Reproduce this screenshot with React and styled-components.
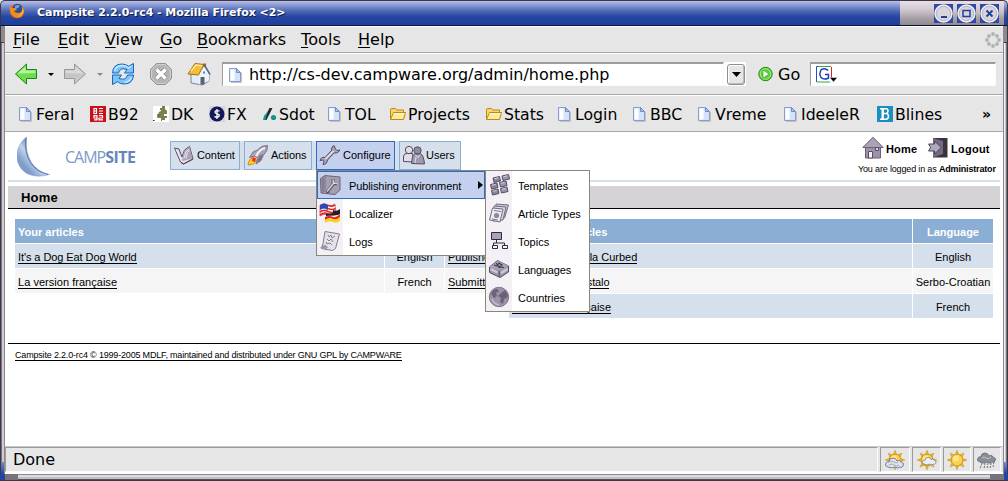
import React from "react";
import styled, { createGlobalStyle } from "styled-components";

const Global = createGlobalStyle`
  * { box-sizing: border-box; }
  body { margin: 0; background: #fff; overflow: hidden; }
`;

/* ---------- window chrome ---------- */

const Window = styled.div`
  width: 1008px;
  height: 481px;
  display: flex;
  flex-direction: column;
  background: #e6e6e6;
  color: #000;
  font-family: "DejaVu Sans", sans-serif;
  font-size: 16px;
  overflow: hidden;
`;

const TitleBar = styled.header`
  height: 26px;
  flex: none;
  display: flex;
  border: 1px solid #3d3746;
  border-top-left-radius: 5px;
  border-top-right-radius: 5px;
  border-bottom-color: #0e1230;
  background: linear-gradient(#b7c1e8 0, #8c9cd6 4px, #5068b4 10px, #2445a0 16px, #1f3f9c 100%);
  padding-left: 8px;
`;

const TitleText = styled.h1`
  margin: 0 auto 0 12px;
  font-size: 11px;
  line-height: 23px;
  color: #fff;
  white-space: nowrap;
  letter-spacing: ${(p) => p.$ls}px;
  text-shadow: 1px 1px 0 #101c48;
`;

const TitleIcon = styled.div`
  width: 16px;
  padding-top: 2px;
`;

const Caption = styled.div`
  width: 104px;
  margin-right: 3px;
  display: flex;
  align-items: center;
  justify-content: flex-end;
  gap: 4px;
  padding-right: 5px;
  background: linear-gradient(#eadfe8, #cfc7cf 9px, #a39da3 18px, #8f8c91);
`;

const Round = styled.div`
  width: 19px;
  height: 19px;
  background: #2d4aa6;
  svg { display: block; }
`;

const Body = styled.div`
  flex: 1;
  display: flex;
  min-height: 0;
`;

const Edge = styled.div`
  width: 5px;
  flex: none;
  display: flex;
  flex-direction: column;
  background: ${(p) =>
    p.$right
      ? "linear-gradient(90deg,#8d898d 0 1px,#f2eff3 1px 2px,#c9c4cb 2px 3px,#77727c 3px 4px,#3d3746 4px)"
      : "linear-gradient(90deg,#3d3746 0 1px,#77727c 1px 2px,#d0cbd2 2px 4px,#8d898d 4px)"};
`;

const EdgeCap = styled.div`
  height: 17px;
  margin: 0 1px;
  background: #8d898d;
  border-bottom: 1px solid #3d3746;
`;

const EdgeCorner = styled.div`
  height: 12px;
  margin: auto 1px 0;
  background: linear-gradient(#7388cc, #2444a4);
`;

const Main = styled.div`
  flex: 1;
  min-width: 0;
  display: flex;
  flex-direction: column;
`;

const BottomFrame = styled.footer`
  height: 7px;
  flex: none;
  display: flex;
  border-bottom: 1px solid #3d3746;
  background: #cfcad1;
`;

const FrameCorner = styled.div`
  width: ${(p) => p.$w}px;
  background: ${(p) => p.$c};
`;

const FrameBar = styled.div`
  flex: 1;
  background: linear-gradient(#8d8990 0 1px, #dedae2 1px 3px, #c3bfc8 3px 5px, #55505c 5px);
`;

const MenuBar = styled.nav`
  height: 27px;
  flex: none;
  display: flex;
  padding-left: 8px;
  border-bottom: 1px solid #a6a6a6;
  border-top: 1px solid #fff;
`;

const MenuItem = styled.span`
  width: ${(p) => p.$w}px;
  line-height: 26px;
  white-space: nowrap;
  letter-spacing: ${(p) => p.$ls || 0}px;
  u { text-underline-offset: 2px; text-decoration-thickness: 1px; text-decoration-skip-ink: none; }
`;

const Throbber = styled.div`
  margin: 5px 2px 0 auto;
`;

const NavBar = styled.div`
  height: 42px;
  flex: none;
  display: flex;
  align-items: center;
  padding: 0 7px 0 9px;
  border-top: 1px solid #fff;
  border-bottom: 1px solid #a6a6a6;
`;

const Slot = styled.div`
  width: ${(p) => p.$w}px;
  flex: none;
  display: flex;
  align-items: center;
`;

const Field = styled.div`
  width: ${(p) => p.$w}px;
  height: 24px;
  flex: none;
  display: flex;
  align-items: center;
  background: #fff;
  border: 1px solid #fafafa;
  border-top: 2px solid #9c9c9c;
  border-left: 1px solid #9c9c9c;
  padding-left: 5px;
  white-space: nowrap;
  letter-spacing: ${(p) => p.$ls || 0}px;
  svg { margin-right: ${(p) => p.$gap || 0}px; }
`;

const DropButton = styled.div`
  width: 22px;
  height: 24px;
  flex: none;
  display: flex;
  background: #fff;
  padding: 2px 1px 1px 3px;
  margin-right: 12px;
`;

const DropFace = styled.div`
  flex: 1;
  display: flex;
  align-items: center;
  justify-content: center;
  border: 1px solid #8f8f8f;
  border-radius: 3px;
  background: #e6e6e6;
  box-shadow: inset -1px -1px 0 #bcbcbc, inset 1px 1px 0 #fff;
`;

const GoText = styled.span`
  width: 36px;
`;

const Bookmarks = styled.div`
  height: 37px;
  flex: none;
  display: flex;
  align-items: center;
  padding-left: 13px;
  padding-top: 1px;
  border-top: 1px solid #fff;
  border-bottom: 1px solid #a6a6a6;
  font-size: 15.700px;
`;

const Bookmark = styled.div`
  width: ${(p) => p.$w}px;
  flex: none;
  display: flex;
  align-items: center;
  gap: 2px;
  white-space: nowrap;
  svg { flex: none; }
`;

const More = styled.b`
  font-size: 14px;
  line-height: 14px;
`;

const StatusBar = styled.div`
  height: 28px;
  flex: none;
  display: flex;
  gap: 2px;
  padding-right: 2px;
  border-top: 1px solid #c8c8c8;
  border-bottom: 2px solid #fff;
  background: #e6e6e6;
`;

const StatusCell = styled.div`
  width: ${(p) => p.$w}px;
  ${(p) => (p.$grow ? "flex: 1;" : "")}
  display: flex;
  align-items: center;
  justify-content: ${(p) => (p.$grow ? "flex-start" : "center")};
  padding-left: ${(p) => (p.$grow ? 7 : 0)}px;
  border: 1px solid #fafafa;
  border-top-color: #9a9a9a;
  border-left-color: #9a9a9a;
  line-height: 22px;
`;

/* ---------- web page ---------- */

const Page = styled.main`
  flex: 1;
  min-height: 0;
  background: #fff;
  padding: 0 3px;
  position: relative;
  font-family: "Liberation Sans", Arial, sans-serif;
  font-size: 11px;
`;

const Header = styled.div`
  height: 50px;
  display: flex;
  border-bottom: 2px solid #d5e0ec;
`;

const Brand = styled.div`
  width: 162px;
  display: flex;
  padding: 4px 0 0 9px;
`;

const BrandName = styled.div`
  margin: 12px 0 0 14px;
  font-family: "Open Sans", "Noto Sans", sans-serif;
  font-size: 16px;
  line-height: 18px;
  color: #7b9ac8;
  letter-spacing: -1px;
  b { color: #6686ba; font-weight: 700; letter-spacing: -0.5px; }
`;

const Tabs = styled.div`
  height: 29px;
  margin-top: 9px;
  display: flex;
  gap: 4px;
  background: #d5e0ec;
`;

const Tab = styled.div`
  width: ${(p) => p.$w}px;
  display: flex;
  align-items: center;
  gap: ${(p) => p.$gap}px;
  padding: 0 0 1px 2px;
  border: 1px solid ${(p) => (p.$active ? "#316ac5" : "#8baed5")};
  background: ${(p) => (p.$active ? "#c3d1ee" : "#d5e0ec")};
  letter-spacing: ${(p) => p.$ls || 0}px;
  white-space: nowrap;
`;

const User = styled.div`
  margin-left: auto;
  width: 146px;
  padding: 4px 0 0 8px;
  white-space: nowrap;
`;

const UserLinks = styled.div`
  display: flex;
  align-items: center;
  height: 23px;
  font-weight: bold;
`;

const LinkLabel = styled.span`
  width: ${(p) => p.$w}px;
  margin-left: ${(p) => p.$ml}px;
  padding-top: 2px;
  letter-spacing: ${(p) => p.$ls || 0}px;
`;

const LoggedIn = styled.div`
  margin-left: -4px;
  font-size: 9px;
  line-height: 20px;
  letter-spacing: ${(p) => p.$ls}px;
`;

const PageTitle = styled.h2`
  margin: 4px 0 10px;
  height: 23px;
  padding-left: 13px;
  background: #d5d3d5;
  border-bottom: 1px solid #000;
  font-size: 13px;
  line-height: 23px;
  letter-spacing: 0.2px;
`;

const Tables = styled.div`
  display: flex;
  gap: 5px;
  padding: 0 7px;
  align-items: flex-start;
`;

const Grid = styled.div`
  display: grid;
  grid-template-columns: ${(p) => p.$cols};
  grid-auto-rows: 24px;
  gap: 1px;
`;

const Cell = styled.div`
  display: flex;
  align-items: center;
  justify-content: ${(p) => (p.$center ? "center" : "flex-start")};
  padding: 2px ${(p) => (p.$center ? 0 : 3)}px 0;
  background: ${(p) => (p.$head ? "#8baed5" : p.$even ? "#f5f5f5" : "#d5e0ec")};
  color: ${(p) => (p.$head ? "#fff" : "#000")};
  font-weight: ${(p) => (p.$head ? "bold" : "normal")};
  letter-spacing: ${(p) => p.$ls || 0}px;
  white-space: nowrap;
`;

const Underlined = styled.span`
  border-bottom: 1px solid #000;
  line-height: 12px;
`;

const Copyright = styled.div`
  margin-top: 25px;
  border-top: 1px solid #000;
  padding: 5px 0 0 7px;
  font-size: 9px;
  letter-spacing: ${(p) => p.$ls}px;
`;

const Menu = styled.div`
  position: absolute;
  left: ${(p) => p.$x}px;
  top: 38px;
  width: ${(p) => p.$w}px;
  border: 1px solid #8a867a;
  background: linear-gradient(90deg, #f4f0f6 26px, #fff 26px);
`;

const MenuRow = styled.div`
  height: 28px;
  display: flex;
  align-items: center;
  padding-left: ${(p) => (p.$active ? 1 : 2)}px;
  border: ${(p) => (p.$active ? "1px solid #316ac5" : "none")};
  background: ${(p) => (p.$active ? "#c3d1ee" : "transparent")};
  letter-spacing: ${(p) => p.$ls || 0}px;
  white-space: nowrap;
`;

const RowLabel = styled.span`
  margin-left: 8px;
  padding-top: 2px;
`;

const RowArrow = styled.svg`
  margin-left: auto;
  margin-right: 1px;
`;

/* ---------- icons ---------- */

const Svg = ({ w = 16, h = 16, vb, children }) => (
  <svg width={w} height={h} viewBox={vb || `0 0 ${w} ${h}`} fill="none">{children}</svg>
);

const FirefoxIcon = () => (
  <Svg>
    <circle cx="8" cy="8" r="7.3" fill="#d9631a" />
    <circle cx="8.5" cy="6" r="5" fill="#284f9f" />
    <path d="M6 3q3-2 5 0l-2 2-3 1z" fill="#67a8d8" />
    <path d="M1 3q-1 6 2 9 4 4 9 2 4-3 3-9-2 5-6 5-3 0-4-2l3-1-2-2H3z" fill="#f08a22" />
    <path d="M13 3q3 5-1 9l-3 2q6-5 4-11" fill="#ffd14a" />
  </Svg>
);

const RoundButton = ({ children }) => (
  <Round>
    <Svg w={19} h={19}>
      <circle cx="9.5" cy="9.5" r="9.2" fill="#f2eef2" />
      <circle cx="9.5" cy="9.5" r="7.2" fill="#dad5dc" stroke="#b4b0b8" />
      {children}
    </Svg>
  </Round>
);

const ArrowIcon = ({ right }) => (
  <Svg w={24} h={24}>
    <g transform={right ? "matrix(-1 0 0 1 24 0)" : undefined}>
      <path d="M1.5 12 12.5 2v5.5h10v9h-10V22z" fill={right ? "#c6c6c6" : "#6fdc4c"} stroke={right ? "#989898" : "#148a1c"} strokeLinejoin="round" />
      <path d="M3.500 11.500 11.500 4.500v4h10v2.500z" fill={right ? "#dadada" : "#b9f39d"} />
    </g>
  </Svg>
);

const Caret = ({ c = "#000", w = 6 }) => (
  <Svg w={w} h={3} vb="0 0 12 6"><path d="M0 0h12L6 6z" fill={c} /></Svg>
);

const ReloadIcon = () => (
  <Svg w={24} h={24}>
    <path d="M1.500 11Q2 2 11 2q4 0 6.500 2.300L22.500 1.500V11h-9l2.500-3.500Q9 5 7.500 11z" fill="#7cc4f6" stroke="#1b64bd" strokeLinejoin="round" />
    <path d="M22.500 13q-.5 9-9.500 9-4 0-6.500-2.300L1.500 22.500V13h9L8 16.500q7 2.500 8.500-3.500z" fill="#7cc4f6" stroke="#1b64bd" strokeLinejoin="round" />
    <path d="M3.500 9Q5 4 11 3.500q4 0 6.500 2.500l3-2M20.500 15q-2 5-7 5.500" stroke="#c7ecff" strokeWidth="1.300" />
  </Svg>
);

const StopIcon = () => (
  <Svg w={24} h={24}>
    <path d="M7.500 1.500h9l6 6v9l-6 6h-9l-6-6v-9z" fill="#b5b5b5" stroke="#929292" />
    <path d="M8 2.500h8l5.500 5.500v8L16 21.500H8L2.500 16V8z" stroke="#d0d0d0" />
    <path d="m7.500 7.500 9 9m0-9-9 9" stroke="#8e8e8e" strokeWidth="5" />
    <path d="m7.500 7.500 9 9m0-9-9 9" stroke="#fff" strokeWidth="3.300" />
  </Svg>
);

const HouseIcon = () => (
  <Svg w={24} h={24}>
    <path d="M4 12v9l11 2 7-4v-9l-6-7z" fill="#e4edf7" stroke="#75859c" />
    <path d="M12 12.500 17.500 4l4.500 7v8l-10 3.500z" fill="#eef3fa" />
    <path d="M16 5h3V1.500h-3z" fill="#d55434" />
    <path d="M1 12 8 1.500l9 1L11.500 13z" fill="#f4bf33" stroke="#a36d12" strokeLinejoin="round" />
    <path d="m4 9 5-6 6 .7" stroke="#ffe597" strokeWidth="1.500" />
    <path d="m17 2.500 6 10" stroke="#536984" strokeWidth="1.500" />
    <path d="M13.500 15h4v7.500h-4z" fill="#59636f" />
    <path d="M16 9.500h2v2h-2z" fill="#4e86cc" />
  </Svg>
);

const PageIcon = ({ w = 16 }) => (
  <Svg w={w} h={16} vb="0 0 16 16">
    <path d="M1.500 1.500h7l4 4v9h-11z" fill="#d3e3fb" stroke="#8b9bcb" />
    <path d="M2.500 2.500h4v11h-4z" fill="#fff" />
    <path d="M8.500 1.500v4h4z" fill="#a9c4f1" stroke="#7489c4" strokeLinejoin="round" />
    <path d="M13.500 6v9.500H3" stroke="#c2c2c2" />
  </Svg>
);

const FolderIcon = () => (
  <Svg>
    <path d="M.5 13.500v-10q0-1 1-1h4l1.500 1.500h6.500v3" fill="#f7d568" stroke="#b8881c" />
    <path d="M.5 13.500 3.500 6.500h12l-2 7z" fill="#fcec95" stroke="#b8881c" strokeLinejoin="round" />
    <path d="M3.700 7.700h10.500" stroke="#fffbd9" />
  </Svg>
);

const B92Icon = () => (
  <Svg>
    <rect width="16" height="16" fill="#c8101a" />
    <path d="M4 2.500h2.500v5H4zM4 5h2.500M9 2.500h4M9 5h4M9 7.500h4M7 12H4V9.700h3v4.100H4M9 9.700h3.500V12H9v1.800h4" stroke="#fff" strokeWidth="1.200" />
  </Svg>
);

const DkIcon = () => (
  <Svg>
    <rect width="16" height="16" fill="#fff" />
    <path d="M9 0h3v3l2 2v3h-3v2h3v2h-2v2H9v1H8v-3H6l-1-3 1-3 2-1V4H7V2h2z" fill="#7c804e" />
    <path d="M0 14.500h1.500M5 8v4" stroke="#222" />
  </Svg>
);

const FxIcon = () => (
  <Svg>
    <rect width="16" height="16" fill="#d4d4e4" />
    <circle cx="8" cy="8" r="7.500" fill="#151a55" />
    <path d="M10.500 5.200Q8 4 6.500 5q-1.300 1.700 1 2.700 3 .5 2.800 2.200Q9 12 5.500 10.700M8 3v10" stroke="#fff" strokeWidth="1.300" />
  </Svg>
);

const SdotIcon = () => (
  <Svg>
    <path d="M8.500 2h3L5.500 14H2.500z" fill="#20242c" />
    <path d="m3 10 4-5-2.500 9H2z" fill="#15928e" />
    <circle cx="12.500" cy="11.500" r="2.600" fill="#15928e" />
  </Svg>
);

const BlinesIcon = () => (
  <Svg>
    <rect width="16" height="16" fill="#1a8fbd" />
    <path d="M5.700 3v10" stroke="#fff" strokeWidth="2.400" />
    <path d="M3 2.800h6.500q1.800.5 1.500 2.500-.3 2-2 2.300H6.500H9.300q2.300.5 2.200 2.800-.2 2.600-2.500 2.800H3" stroke="#fff" strokeWidth="1.500" />
  </Svg>
);

const GoIcon = () => (
  <Svg>
    <circle cx="7.500" cy="8" r="6.700" fill="#5fce3b" stroke="#1c8a17" />
    <circle cx="7.500" cy="8" r="5.300" stroke="#a5ec83" />
    <path d="M5 4v8l6-4z" fill="#fff" stroke="#2d9b22" strokeWidth=".6" />
  </Svg>
);

const GoogleIcon = () => (
  <Svg w={22} h={17}>
    <path d="M.5 16V.5h13" stroke="#2850c0" />
    <path d="M2 .5h13M1 16h13" stroke="#34a834" />
    <path d="M15.500 1v12" stroke="#e02020" />
    <path d="M12.200 4.500Q8.500 1.300 5.300 3.700 2.700 7.500 4.800 11.200q3.200 3.300 7.700.8V8.500H9" stroke="#1a3fc0" strokeWidth="1.500" />
    <path d="M13.500 11.500h8l-4 4.500z" fill="#000" stroke="#fff" strokeWidth=".5" />
  </Svg>
);

const MoonIcon = () => (
  <Svg w={34} h={42}>
    <defs>
      <linearGradient id="moon" x1="0" y1="1" x2="1" y2="0">
        <stop offset=".25" stopColor="#7f9dcb" />
        <stop offset=".45" stopColor="#c3d3ea" />
        <stop offset=".6" stopColor="#7593c4" />
      </linearGradient>
    </defs>
    <path d="M9.500 1C-4 12-3 31 11 38q9 4 21.500.5Q20 36 14 26 8 15 9.500 1z" fill="url(#moon)" stroke="#86a1cd" strokeWidth=".6" />
    <path d="M9 2Q7 16 13.500 26.500 20 36 31 38.500" stroke="#6080b6" strokeWidth="1.200" />
  </Svg>
);

const ink = "#554e63";
const mid = "#aaa3b8";
const pale = "#e0dce8";

const BookIcon = () => (
  <Svg w={22} h={22}>
    <path d="M1.500 4 7.500 18l3 2 9.500-5L16.500 2.500l-5 3.500-2.500 7-3-8z" fill={pale} stroke={ink} strokeLinejoin="round" />
    <path d="M9 17 11.500 6.500l5-3.500 3 11.500z" fill={mid} />
    <path d="m11 14.500 2-7 3-2M13 14.500l1.500-6 2-2M3 5l6 13" stroke="#ece8f0" />
    <path d="M8 18.500l2.500 1.500 9.500-5" stroke="#5a3c4c" />
  </Svg>
);

const RocketIcon = () => (
  <Svg w={22} h={22}>
    <path d="M20.500 1.500q-6-.5-10 4.500L6 8l-3.500 5.500L8 12l2.500 2.500L9 20l5-3.500 2.500-5.500q4.500-4 4-9.500z" fill={mid} stroke="#7b7488" />
    <path d="M18 4q-5 1-9 8" stroke="#f4f1f7" strokeWidth="2.200" />
    <path d="m12 12 4-2-2 6-4 3z" fill="#7b7288" />
    <path d="M6.500 13q-5 2-5.500 8 7 0 8.500-5z" fill="#ffcf16" stroke="#b96e22" strokeWidth=".7" />
    <path d="M5.500 13.500 9 14l-1 4-3-1z" fill="#ef3218" />
  </Svg>
);

const WrenchIcon = () => (
  <Svg w={22} h={22}>
    <path d="M15 1.500q-3 1-2.500 5L6 13.500q-4-1-5 3l3-.5 1 1.500-1 3q4 0 4.500-4.500L15 9q4 1 6-3l-3 .5-1.500-1.500z" fill={mid} stroke={ink} strokeLinejoin="round" />
    <path d="m6.500 15 8-8" stroke="#e9e5ee" strokeWidth="1.500" />
  </Svg>
);

const UsersIcon = () => (
  <Svg w={24} h={22}>
    <circle cx="7" cy="6" r="3.700" fill={pale} stroke={ink} />
    <path d="M1.500 17.500V12q1-3 4-2.500h5L12 18z" fill={pale} stroke={ink} />
    <circle cx="15.500" cy="6.500" r="3.700" fill="#928aa0" stroke={ink} />
    <path d="M9.500 19.500l1-7q1-2.500 3-2.500h5.500q2.500 1 3.500 10z" fill="#a199ad" stroke={ink} />
    <path d="m13 10.500 3 3 2-3M14 13l-1 6" stroke={pale} />
  </Svg>
);

const PublishIcon = () => (
  <Svg w={22} h={22}>
    <path d="M1.500 4.500 6 1.500l15 1.500V16l-5 4.500-14-1.500z" fill="#a59eb1" stroke="#6d6579" strokeLinejoin="round" />
    <path d="M6 2v15l-4 2" stroke="#7a7288" />
    <path d="M2.500 5v13l2.500-1.500V3.500z" fill="#857d92" />
    <path d="m8 18 7-9M8 16.500l1.500 2.500M14 5v4l4 1" stroke="#57505f" strokeWidth="3" />
    <path d="m8 17.500 7.500-9.500M14 5.500l.5 3.500 4 .5" stroke="#d8d3df" strokeWidth="1.500" />
  </Svg>
);

const FlagIcon = () => (
  <Svg w={22} h={22}>
    <path d="M1 3q5-3 8 0 4 2 7-1l1 10q-4 3-8 1-4-2-8 1z" fill="#fff" stroke="#b73336" strokeWidth=".6" />
    <path d="M9 3.500q4 1.500 7-.5M9 6.500q4 2 7.500 0M1 10q4-3 8-.5 4 2 8 0M1 13q4-3 8-1 4 2 8 0" stroke="#e42828" strokeWidth="1.700" />
    <path d="M1 3q4-3 8 0v5q-4-3-8 0z" fill="#3046b5" />
    <path d="M14 8q4 2 7-1v5q-3 2-7 1l-7 1v-2l7-1z" fill="#20202a" />
    <path d="M6 15q4-2 8 0 4 1 7-3v3q-4 4-7 2-4-2-8 1z" fill="#de2522" />
    <path d="M6 18q4-3 8-1 4 1 7-2v4q-4 3-7 1-4-2-8 1z" fill="#ffd019" />
  </Svg>
);

const LogsIcon = () => (
  <Svg w={22} h={22}>
    <path d="M6 1.500 20.500 4l-4 14.500-3 2-11-2 1.500-5z" fill="#e5e1e9" stroke="#827b8c" strokeLinejoin="round" />
    <path d="m9 5 1 2 2-2 1 3 3-2M8 9l2 2 2-2 2 3M7 12l1 2 3-1 2 2" stroke="#887f93" />
    <path d="M1 18q2-3 5-3l-1-1 4 3-3 4v-2z" fill="#9d96aa" />
  </Svg>
);

const TemplatesIcon = () => (
  <Svg w={22} h={22}>
    {[[5, 4], [14, 2], [2.500, 10.500], [11.500, 8.500], [3.500, 16.500], [12.500, 14.500]].map(([x, y], i) => (
      <g key={i} transform={`translate(${x} ${y})`}>
        <path d="M0 0l6.500-1.500 1 4.500-6.500 1.500z" fill={i % 2 ? "#9c94a9" : "#8c8499"} stroke={ink} strokeLinejoin="round" />
        <path d="M1.300.8l4-1" stroke="#d4cede" />
      </g>
    ))}
  </Svg>
);

const ArticlesIcon = () => (
  <Svg w={22} h={22}>
    <path d="m8 2 12.500 1-4 13-9 1z" fill="#ccc6d5" stroke="#736b80" strokeLinejoin="round" />
    <path d="m6 4 12 1-3 13-10 1z" fill="#ddd8e3" stroke="#736b80" strokeLinejoin="round" />
    <path d="m4.500 6 10.500 1-3 13-10.500-2z" fill="#eeeaf2" stroke="#736b80" strokeLinejoin="round" />
    <path d="m6 8.500 7 1M4 17l6 1" stroke="#81778f" />
    <circle cx="8.500" cy="13.500" r="2.600" fill="#8f879b" />
  </Svg>
);

const TopicsIcon = () => (
  <Svg w={22} h={22}>
    <path d="M3.500 2.500h10v7h-10z" fill={mid} stroke="#2f2a3a" />
    <path d="M8.500 10v3M5.500 16v-3h11v3" stroke="#2f2a3a" />
    <path d="M4.500 15.500h5v3h-5zM14.500 15.500h5v3h-5z" fill="#f5f2f8" stroke="#2f2a3a" />
  </Svg>
);

const LanguagesIcon = () => (
  <Svg w={22} h={22}>
    <path d="m1.500 9 8-6.500 11 5.500v6L12 19.500 1.500 14.500z" fill="#9c94a8" stroke={ink} strokeLinejoin="round" />
    <path d="M1.500 9 11 12l9.500-4L10 2.500z" fill="#aaa3b5" />
    <path d="m6 7 3 1 2-3 3 2-3 2 5 .5M8 5l4 5" stroke="#3f384b" strokeWidth="1.200" />
    <path d="m2.500 11 7 3.500M13 15l6.500-4" stroke="#cdc7d6" strokeWidth="2.500" />
    <path d="M11.200 12.500V19" stroke={ink} />
  </Svg>
);

const GlobeIcon = () => (
  <Svg w={22} h={22}>
    <circle cx="11" cy="11" r="9.700" fill="#9b93a7" stroke="#7f778d" />
    <path d="M3 8q2-5 6-5l2 2-3 2 1 3-3 2zM12 8l5-4 3 5-1 3-3 1-1 5-3-2 1-4-3-2z" fill="#6b6279" />
    <path d="M4 13q2 5 7 6" stroke="#c3bdcd" strokeWidth="1.500" />
  </Svg>
);

const HomeLinkIcon = () => (
  <Svg w={22} h={23}>
    <path d="M3.500 10v12h15V10L11 3z" fill="#a08fa8" stroke="#6a5f76" />
    <path d="M.8 11.500 11 1.200l10.200 10.300z" fill="#aca2b5" stroke="#6a6275" strokeLinejoin="round" />
    <path d="M6.500 15.500h4V22h-4z" fill="#f4f1f7" stroke={ink} />
    <path d="M13.500 11.500h3v3h-3z" fill="#ddd8e3" stroke={ink} />
  </Svg>
);

const LogoutIcon = () => (
  <Svg w={20} h={21}>
    <path d="M5 1h14.500v19.500H5z" fill="#39333f" />
    <path d="m5 1 10 3v13L5 20.500z" fill="#756981" />
    <path d="M.6 7h6V4l6.500 6.500L6.600 17v-3h-6l2-3.500z" fill="#b0a8bc" stroke="#4a4355" strokeLinejoin="round" />
  </Svg>
);

const SUN_RAYS = "M10 0 12 5 17 3 15 8 20 10 15 12 17 17 12 15 10 20 8 15 3 17 5 12 0 10 5 8 3 3 8 5z";

const Sun = () => (
  <g>
    <path d={SUN_RAYS} fill="#e3b32e" stroke="#a97711" strokeWidth=".3" />
    <circle cx="10" cy="10" r="5.800" fill="#fbd24f" stroke="#d68e18" strokeWidth=".8" />
    <circle cx="9" cy="8.500" r="3" fill="#ffe98c" />
  </g>
);

const Cloud = ({ t, fill = "#dfe3ee" }) => (
  <path transform={t} d="M3 12q-4-1-2-4 1-2 3-1 0-4 4-4 3 0 4 3 3-2 4 1 4 1 2 4-1 2-3 1-2 2-5 0-3 2-7 0z" fill={fill} stroke="#6d7387" strokeWidth=".9" />
);

const WeatherIcon = ({ kind }) => (
  <Svg w={20} h={20}>
    {kind !== "rain" && <Sun />}
    {kind === "cloudy" && (
      <>
        <Cloud t="translate(0 5)" />
        <path d="M5 12q2-2 4 0t4 0M4 15q3-2 5 0t5 0" stroke="#a4aabb" />
      </>
    )}
    {kind === "partly" && <Cloud t="translate(5 5) scale(.76)" fill="#e9eef8" />}
    {kind === "rain" && (
      <>
        <Cloud t="translate(0 0)" fill="#8b8d95" />
        <path d="M5 8q2-2 4 0t5-1" stroke="#c9cad0" />
        <path d="m5 13-2 6M8 13l-1 6M11 13l-1 6M14 13l-1 6M17 12l-1 5" stroke="#6b6e78" strokeDasharray="2 1" />
      </>
    )}
  </Svg>
);

/* ---------- data ---------- */

const MENUS = [["File", 45], ["Edit", 47], ["View", 55], ["Go", 37], ["Bookmarks", 104, -0.05], ["Tools", 57, 0.1], ["Help", 50]];

const BOOKMARKS = [
  ["Feral", 72, PageIcon], ["B92", 63, B92Icon], ["DK", 56, DkIcon], ["FX", 52, FxIcon], ["Sdot", 66, SdotIcon],
  ["TOL", 63, PageIcon], ["Projects", 96, FolderIcon], ["Stats", 71, FolderIcon], ["Login", 75, PageIcon],
  ["BBC", 65, PageIcon], ["Vreme", 86, PageIcon], ["IdeeleR", 94, PageIcon], ["Blines", 105, BlinesIcon],
];

const CONFIGURE = [["Publishing environment", PublishIcon, true], ["Localizer", FlagIcon], ["Logs", LogsIcon]];

const PUBLISHING = [
  ["Templates", TemplatesIcon], ["Article Types", ArticlesIcon], ["Topics", TopicsIcon],
  ["Languages", LanguagesIcon, -0.15], ["Countries", GlobeIcon],
];

const OWN = [["It's a Dog Eat Dog World", "English", "Published", -0.08], ["La version française", "French", "Submitted", 0.03]];

const SUBMITTED = [["A Return of Ebola Curbed", "English"], ["Sta je od toga ostalo", "Serbo-Croatian", -0.14], ["La version française", "French", 0.03]];

export default function App() {
  return (
    <Window>
      <Global />
      <TitleBar>
        <TitleIcon><FirefoxIcon /></TitleIcon>
        <TitleText $ls={-0.05}>Campsite 2.2.0-rc4 - Mozilla Firefox &lt;2&gt;</TitleText>
        <Caption>
          <RoundButton><path d="M7 13h6" stroke="#1f3f9c" strokeWidth="2" /></RoundButton>
          <RoundButton><path d="M6 6.500h7v6H6z" stroke="#1f3f9c" strokeWidth="1.500" /></RoundButton>
          <RoundButton><path d="m6.500 6.500 6 6m0-6-6 6" stroke="#1f3f9c" strokeWidth="1.800" /></RoundButton>
        </Caption>
      </TitleBar>
      <Body>
        <Edge><EdgeCap /><EdgeCorner /></Edge>
        <Main>
          <MenuBar>
            {MENUS.map(([name, w, ls]) => (
              <MenuItem key={name} $w={w} $ls={ls}><u>{name[0]}</u>{name.slice(1)}</MenuItem>
            ))}
            <Throbber>
              <Svg>
                {[[8, 2], [12, 4], [14, 8], [12, 12], [8, 14], [4, 12], [2, 8], [4, 4]].map(([x, y]) => (
                  <circle key={`${x}-${y}`} cx={x} cy={y} r="1.900" fill="#b3b3b3" />
                ))}
              </Svg>
            </Throbber>
          </MenuBar>
          <NavBar>
            <Slot $w={34}><ArrowIcon /></Slot>
            <Slot $w={15}><Caret /></Slot>
            <Slot $w={34}><ArrowIcon right /></Slot>
            <Slot $w={14}><Caret c="#8a8a8a" /></Slot>
            <Slot $w={38}><ReloadIcon /></Slot>
            <Slot $w={38}><StopIcon /></Slot>
            <Slot $w={35}><HouseIcon /></Slot>
            <Field $w={502} $gap={5} $ls={-0.03}><PageIcon />http://cs-dev.campware.org/admin/home.php</Field>
            <DropButton><DropFace><Svg w={9} h={5}><path d="M0 0h9L4.500 5z" fill="#000" /></Svg></DropFace></DropButton>
            <Slot $w={20}><GoIcon /></Slot>
            <GoText>Go</GoText>
            <Field $w={186}><GoogleIcon /></Field>
          </NavBar>
          <Bookmarks>
            {BOOKMARKS.map(([name, w, Icon]) => (
              <Bookmark key={name} $w={w}><Icon />{name}</Bookmark>
            ))}
            <More>»</More>
          </Bookmarks>
          <Page>
            <Header>
              <Brand><MoonIcon /><BrandName>CAMP<b>SITE</b></BrandName></Brand>
              <Tabs>
                <Tab $w={70} $gap={2} $ls={-0.1}><BookIcon />Content</Tab>
                <Tab $w={68} $gap={2} $ls={-0.1}><RocketIcon />Actions</Tab>
                <Tab $w={79} $gap={2} $active><WrenchIcon />Configure</Tab>
                <Tab $w={62} $gap={0}><UsersIcon />Users</Tab>
              </Tabs>
              <User>
                <UserLinks>
                  <HomeLinkIcon /><LinkLabel $w={42} $ml={2} $ls={0.15}>Home</LinkLabel>
                  <LogoutIcon /><LinkLabel $w={42} $ml={3} $ls={0.25}>Logout</LinkLabel>
                </UserLinks>
                <LoggedIn $ls={-0.16}>You are logged in as <b>Administrator</b></LoggedIn>
              </User>
            </Header>
            <PageTitle>Home</PageTitle>
            <Tables>
              <Grid $cols="369px 59px 59px">
                <Cell $head>Your articles</Cell>
                <Cell $head $center>Language</Cell>
                <Cell $head>Status</Cell>
                {OWN.map(([title, lang, status, ls], i) => (
                  <React.Fragment key={title}>
                    <Cell $even={i % 2} $ls={ls}><Underlined>{title}</Underlined></Cell>
                    <Cell $even={i % 2} $center>{lang}</Cell>
                    <Cell $even={i % 2}><Underlined>{status}</Underlined></Cell>
                  </React.Fragment>
                ))}
              </Grid>
              <Grid $cols="403px 80px">
                <Cell $head>Submitted articles</Cell>
                <Cell $head $center>Language</Cell>
                {SUBMITTED.map(([title, lang, ls], i) => (
                  <React.Fragment key={title}>
                    <Cell $even={i % 2} $ls={ls}><Underlined>{title}</Underlined></Cell>
                    <Cell $even={i % 2} $center>{lang}</Cell>
                  </React.Fragment>
                ))}
              </Grid>
            </Tables>
            <Copyright $ls={-0.18}>
              <Underlined>Campsite 2.2.0-rc4 © 1999-2005 MDLF, maintained and distributed under GNU GPL by CAMPWARE</Underlined>
            </Copyright>
            <Menu $x={311} $w={170}>
              {CONFIGURE.map(([name, Icon, active]) => (
                <MenuRow key={name} $active={active} $ls={active ? -0.1 : 0}>
                  <Icon /><RowLabel>{name}</RowLabel>
                  {active && <RowArrow width="5" height="8" viewBox="0 0 5 8"><path d="M0 0v8l5-4z" fill="#000" /></RowArrow>}
                </MenuRow>
              ))}
            </Menu>
            <Menu $x={480} $w={105}>
              {PUBLISHING.map(([name, Icon, ls]) => (
                <MenuRow key={name} $ls={ls}><Icon /><RowLabel>{name}</RowLabel></MenuRow>
              ))}
            </Menu>
          </Page>
          <StatusBar>
            <StatusCell $grow>Done</StatusCell>
            <StatusCell $w={30}><WeatherIcon kind="cloudy" /></StatusCell>
            <StatusCell $w={29}><WeatherIcon kind="partly" /></StatusCell>
            <StatusCell $w={28}><WeatherIcon kind="sunny" /></StatusCell>
            <StatusCell $w={28}><WeatherIcon kind="rain" /></StatusCell>
          </StatusBar>
        </Main>
        <Edge $right><EdgeCap /><EdgeCorner /></Edge>
      </Body>
      <BottomFrame>
        <FrameCorner $w={5} $c="#2444a4" />
        <FrameCorner $w={13} $c="#77737c" />
        <FrameBar />
        <FrameCorner $w={14} $c="#77737c" />
        <FrameCorner $w={4} $c="#2444a4" />
      </BottomFrame>
    </Window>
  );
}
